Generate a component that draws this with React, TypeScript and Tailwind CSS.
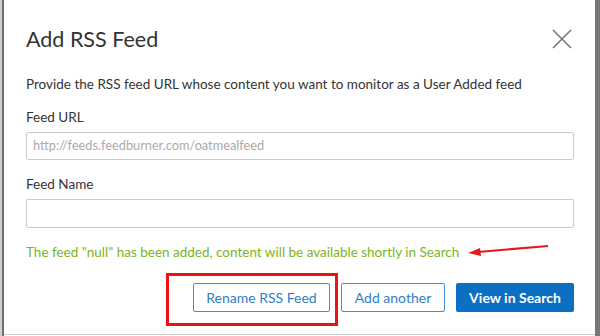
import React from "react";

export default function App() {
  return (
    <div className="w-[600px] h-[336px] flex bg-white overflow-hidden" style={{ fontFamily: "Lato, 'Noto Sans', sans-serif" }}>
      <div className="w-[2px] h-full bg-[#cfcfcf]" />
      <div className="w-[2px] h-full bg-[#6e6e6e]" />
      <div className="relative flex-1 h-[335px] flex flex-col border-b border-[#cccccc] pl-[22px] pr-[21px]">
        <div className="flex items-center justify-between h-[26px] mt-[26px]">
          <h1 className="text-[21.5px] leading-[26px] text-[#333333]">Add RSS Feed</h1>
          <svg width="20" height="20" viewBox="0 0 20 20" className="mr-[2px]">
            <path d="M1 1 L19 19 M19 1 L1 19" stroke="#777" strokeWidth="1.6" fill="none" />
          </svg>
        </div>
        <p className="mt-[22px] text-[13.5px] leading-[20px] text-[#333333]">
          Provide the RSS feed URL whose content you want to monitor as a User Added feed
        </p>
        <label className="mt-[13px] text-[13.5px] leading-[20px] text-[#333333]">Feed URL</label>
        <div className="mt-[5px] h-[28px] border border-[#cccccc] rounded-[2px] flex items-center px-[6px] text-[12.75px] text-[#aaaaaa]">
          http://feeds.feedburner.com/oatmealfeed
        </div>
        <label className="mt-[14px] text-[13.5px] leading-[20px] text-[#333333]">Feed Name</label>
        <div className="mt-[5px] h-[29px] border border-[#cccccc] rounded-[2px]" />
        <p className="mt-[14px] text-[13.5px] leading-[20px] text-[#7cb518]">
          The feed "null" has been added, content will be available shortly in Search
        </p>
        <div className="mt-[21px] flex justify-end gap-[11px]">
          <button className="h-[29px] w-[137px] border border-[#3d8fd6] rounded-[2px] text-[14px] text-[#2f7fc6] bg-white">
            Rename RSS Feed
          </button>
          <button className="h-[29px] w-[104px] border border-[#3d8fd6] rounded-[2px] text-[14px] text-[#2f7fc6] bg-white">
            Add another
          </button>
          <button className="h-[29px] w-[118px] rounded-[2px] text-[14px] text-white bg-[#0b6fc2] font-bold">
            View in Search
          </button>
        </div>
        <div className="absolute left-[162px] top-[273px] w-[172px] h-[53px] border-[3px] border-[#ee1111]" />
        <svg className="absolute left-[462px] top-[238px]" width="86" height="22" viewBox="0 0 86 22">
          <path d="M82 8 L12 14" stroke="#e5181e" strokeWidth="2.2" fill="none" />
          <path d="M2 15 L14 10 L15 18 Z" fill="#e5181e" />
        </svg>
      </div>
      <div className="w-[5px] h-full bg-[#777777]" />
    </div>
  );
}
